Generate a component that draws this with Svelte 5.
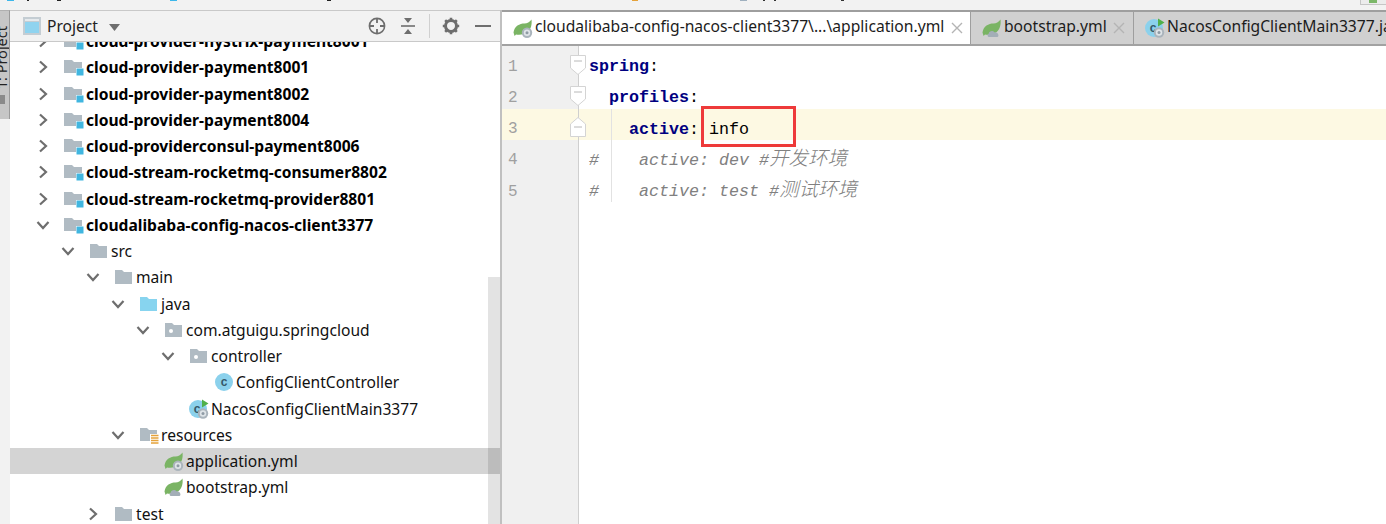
<script>
  const rows = [
    { d: 0, c: 'r', i: 'module', t: 'cloud-provider-hystrix-payment8001', b: true },
    { d: 0, c: 'r', i: 'module', t: 'cloud-provider-payment8001', b: true },
    { d: 0, c: 'r', i: 'module', t: 'cloud-provider-payment8002', b: true },
    { d: 0, c: 'r', i: 'module', t: 'cloud-provider-payment8004', b: true },
    { d: 0, c: 'r', i: 'module', t: 'cloud-providerconsul-payment8006', b: true },
    { d: 0, c: 'r', i: 'module', t: 'cloud-stream-rocketmq-consumer8802', b: true },
    { d: 0, c: 'r', i: 'module', t: 'cloud-stream-rocketmq-provider8801', b: true },
    { d: 0, c: 'd', i: 'module', t: 'cloudalibaba-config-nacos-client3377', b: true },
    { d: 1, c: 'd', i: 'folder', t: 'src' },
    { d: 2, c: 'd', i: 'folder', t: 'main' },
    { d: 3, c: 'd', i: 'java', t: 'java' },
    { d: 4, c: 'd', i: 'pkg', t: 'com.atguigu.springcloud' },
    { d: 5, c: 'd', i: 'pkg', t: 'controller' },
    { d: 6, c: '', i: 'class', t: 'ConfigClientController' },
    { d: 5, c: '', i: 'main', t: 'NacosConfigClientMain3377' },
    { d: 3, c: 'd', i: 'res', t: 'resources' },
    { d: 4, c: '', i: 'app', t: 'application.yml', sel: true },
    { d: 4, c: '', i: 'boot', t: 'bootstrap.yml' },
    { d: 2, c: 'r', i: 'folder', t: 'test' }
  ];
  const crumbs = [
    { x: 7, w: 7, col: '#3db7ea' }, { x: 27, w: 2, col: '#222' }, { x: 57, w: 4, col: '#222' },
    { x: 170, w: 7, col: '#3db7ea' }, { x: 327, w: 4, col: '#222' }, { x: 632, w: 6, col: '#e5a23a' },
    { x: 740, w: 7, col: '#9fb0bf' }, { x: 763, w: 2, col: '#333' }, { x: 774, w: 2, col: '#333' }, { x: 841, w: 3, col: '#333' }
  ];
</script>

{#snippet gear(cx, cy)}
  <circle {cx} {cy} r="5.2" fill="#aab4bc" />
  <circle {cx} {cy} r="3.2" fill="#dfe4e8" />
  <circle {cx} {cy} r="1.5" fill="#8f9ba5" />
{/snippet}

{#snippet leaf()}
  <path d="M0.5 14.5C1.5 8 6.5 5.5 11.5 5.5c2.8 0 5-1.5 7-4 .6 5-.4 9.5-3.8 12.5-3 2.5-8.5 3.4-11.7 2.4L1.6 18z" fill="#7ab464" />
{/snippet}

{#snippet icon(kind)}
  <svg class="ic" viewBox="0 0 20 20" aria-hidden="true">
    {#if kind === 'module'}
      <path d="M0 3h8l2 2h8v11H0z" fill="#b0bbc3" />
      <rect x="12" y="11" width="7.5" height="7.5" fill="#fff" />
      <rect x="12.5" y="11.5" width="7" height="7" fill="#40b6e0" />
    {:else if kind === 'folder'}
      <path d="M1 3h7l2 2h8v12H1z" fill="#b0bbc3" />
    {:else if kind === 'java'}
      <path d="M1 3h7l2 2h8v12H1z" fill="#87d4ef" />
    {:else if kind === 'pkg'}
      <path d="M1 3h7l2 2h8v12H1z" fill="#b0bbc3" />
      <circle cx="7" cy="11" r="2" fill="#fff" />
    {:else if kind === 'res'}
      <path d="M1 3h7l2 2h8v11H1z" fill="#b0bbc3" />
      <rect x="11" y="9" width="9" height="10" fill="#fff" />
      <path d="M12 10.5h7.5M12 13h7.5M12 15.5h7.5M12 18h7.5" stroke="#e5a23a" stroke-width="1.3" />
    {:else if kind === 'class'}
      <circle cx="10" cy="10" r="9" fill="#8bd1ec" />
      <text x="10" y="14" text-anchor="middle" class="cgl">c</text>
    {:else if kind === 'main'}
      <circle cx="9" cy="10" r="9" fill="#8bd1ec" />
      <text x="8" y="14" text-anchor="middle" class="cgl">c</text>
      <path d="M13 0.5l6.5 4-6.5 4z" fill="#4fb04a" />
      {@render gear(14, 14.5)}
    {:else if kind === 'app'}
      {@render leaf()}
      {@render gear(14, 14.8)}
    {:else if kind === 'boot'}
      {@render leaf()}
      <path d="M7.5 19c-2 0-2.8-2.8-.7-3.6.3-2.2 3.9-3.3 5.6-1.1 3.2-1.1 5.6 3.8 2.9 4.7z" fill="#a3aeb7" />
    {/if}
  </svg>
{/snippet}

{#snippet foldBox(up)}
  <svg class="fold" viewBox="0 0 18 22" aria-hidden="true">
    {#if up}
      <path d="M1.5 20.5V8L9 1.5 16.5 8v12.5z" fill="#fff" stroke="#d4d4d4" />
    {:else}
      <path d="M1.5 1.5h15V14L9 20.5 1.5 14z" fill="#fff" stroke="#d4d4d4" />
    {/if}
    <path d="M5 {up ? 11 : 7}h8" stroke="#b8b8b8" />
  </svg>
{/snippet}

{#snippet closeX()}
  <svg class="x" viewBox="0 0 12 12" aria-hidden="true"><path d="M1 1l10 10M11 1L1 11" stroke="#b4b4b4" stroke-width="1.4" /></svg>
{/snippet}

<div class="page">
  <div class="strip">
    {#each crumbs as k}
      <i class="crumb" style="left:{k.x}px;width:{k.w}px;background:{k.col}"></i>
    {/each}
    <div class="corner"><i></i></div>
  </div>

  <div class="body">
    <aside class="rail">
      <div class="railtab">
        <span>1: Project</span>
        <i class="railmark"></i>
      </div>
    </aside>

    <section class="pane">
      <header class="phead">
        <svg class="pico" viewBox="0 0 18 18" aria-hidden="true">
          <rect width="18" height="18" fill="#c4cdd3" />
          <rect x="2" y="5" width="14" height="11" fill="#8fd3ef" />
          <rect x="2" y="2" width="14" height="2" fill="#e6eaed" />
        </svg>
        <span class="ptitle">Project</span>
        <svg class="parrow" viewBox="0 0 11 7" aria-hidden="true"><path d="M0 0h11L5.5 7z" fill="#6e6e6e" /></svg>
        <span class="spacer"></span>
        <svg class="tool" viewBox="0 0 18 18" aria-hidden="true">
          <circle cx="9" cy="9" r="7.6" fill="none" stroke="#6e6e6e" stroke-width="1.6" />
          <path d="M9 1v5M9 12v5M1 9h5M12 9h5" stroke="#6e6e6e" stroke-width="1.8" />
        </svg>
        <svg class="tool t2" viewBox="0 0 18 18" aria-hidden="true">
          <path d="M2 9h14" stroke="#6e6e6e" stroke-width="1.6" />
          <path d="M5 1h8L9 6zM5 17h8l-4-5z" fill="#6e6e6e" />
        </svg>
        <i class="psep"></i>
        <svg class="tool t3" viewBox="0 0 18 18" aria-hidden="true">
          <path d="M9 3.5a5.5 5.5 0 1 0 0 11 5.5 5.5 0 0 0 0-11z" fill="none" stroke="#6e6e6e" stroke-width="3" />
          <path d="M9 .8v3M9 14.2v3M.8 9h3M14.2 9h3M3.2 3.2l2.1 2.1M12.7 12.7l2.1 2.1M3.2 14.8l2.1-2.1M12.7 5.3l2.1-2.1" stroke="#6e6e6e" stroke-width="2.6" />
        </svg>
        <i class="minus"></i>
      </header>
      <div class="tree">
        <div class="treelist">
          {#each rows as r}
            <div class="row" class:sel={r.sel} class:bold={r.b} style="padding-left:{26 + 25 * r.d}px">
              <span class="chev">
                {#if r.c === 'r'}
                  <svg viewBox="0 0 12 14" aria-hidden="true"><path d="M3 1.5L9 7l-6 5.5" fill="none" stroke="#6e6e6e" stroke-width="2.2" /></svg>
                {:else if r.c === 'd'}
                  <svg viewBox="0 0 14 12" aria-hidden="true"><path d="M1.5 3L7 9l5.5-6" fill="none" stroke="#6e6e6e" stroke-width="2.2" /></svg>
                {/if}
              </span>
              {@render icon(r.i)}
              <span class="lbl">{r.t}</span>
            </div>
          {/each}
        </div>
        <div class="thumb"></div>
      </div>
    </section>

    <main class="editor">
      <nav class="tabs">
        <div class="tab on t-a">
          {@render icon('app')}
          <span class="tt">cloudalibaba-config-nacos-client3377\...\application.yml</span>
          {@render closeX()}
        </div>
        <div class="tab t-b">
          {@render icon('boot')}
          <span class="tt">bootstrap.yml</span>
          {@render closeX()}
        </div>
        <div class="tab t-c">
          {@render icon('main')}
          <span class="tt">NacosConfigClientMain3377.java</span>
        </div>
      </nav>
      <div class="lines">
        <div class="ln">
          <div class="gut"><span>1</span><div class="foldwrap">{@render foldBox(false)}</div></div>
          <div class="code"><span class="key">spring</span>:</div>
        </div>
        <div class="ln">
          <div class="gut"><span>2</span><div class="foldwrap">{@render foldBox(false)}</div></div>
          <div class="code">{'  '}<span class="key">profiles</span>:</div>
        </div>
        <div class="ln cur">
          <div class="gut"><span>3</span><div class="foldwrap up">{@render foldBox(true)}</div></div>
          <div class="code guide">{'    '}<span class="key">active</span>: info<div class="redbox"></div></div>
        </div>
        <div class="ln">
          <div class="gut"><span>4</span></div>
          <div class="code guide cm">#    active: dev #<span class="cjk">开发环境</span></div>
        </div>
        <div class="ln">
          <div class="gut"><span>5</span></div>
          <div class="code guide cm">#    active: test #<span class="cjk">测试环境</span></div>
        </div>
        <div class="rest"><div class="gut fill"></div></div>
      </div>
    </main>
  </div>
</div>

<style>
  :global(body) { margin: 0; background: #fff; }
  .page {
    width: 1386px; height: 524px; overflow: hidden; display: flex; flex-direction: column;
    font-family: "Noto Sans", "Open Sans", sans-serif; color: #1a1a1a; background: #fff;
  }
  .strip { height: 10px; flex: none; background: #f2f2f2; position: relative; }
  .crumb { position: absolute; top: 0; height: 1px; }
  .corner {
    position: absolute; top: -1px; right: 0; width: 26px; height: 6px;
    border: 1px solid #c6c6c6; border-right: 0; background: #ececec; box-sizing: border-box;
  }
  .corner i { display: block; width: 8px; height: 3px; margin-left: 8px; background: #7cb769; }
  .body { flex: 1; display: flex; min-height: 0; }

  .rail { width: 10px; flex: none; background: #f2f2f2; }
  .railtab {
    height: 109px; box-sizing: border-box; background: #c6c6c6; border-right: 1px solid #9a9a9a;
    border-top: 1px solid #b0b0b0; overflow: hidden; position: relative;
  }
  .railtab span {
    position: absolute; left: -6px; top: 15px; writing-mode: vertical-rl; transform: rotate(180deg);
    font-size: 14.5px; line-height: 14px; color: #222; white-space: nowrap;
  }
  .railmark { position: absolute; left: 0; top: 84px; width: 5px; height: 9px; background: #8a8a8a; }

  .pane { width: 490px; flex: none; display: flex; flex-direction: column; min-height: 0; }
  .phead {
    height: 32px; flex: none; box-sizing: border-box; display: flex; align-items: center;
    background: #f2f2f2; border-top: 1px solid #c9c9c9; border-bottom: 1px solid #c9c9c9; padding-left: 13px;
  }
  .pico { width: 18px; height: 18px; }
  .ptitle { margin-left: 6px; font-size: 15.6px; color: #222; }
  .parrow { width: 11px; height: 7px; margin-left: 11px; margin-top: 2px; }
  .spacer { flex: 1; }
  .tool { width: 18px; height: 18px; flex: none; }
  .t2 { margin-left: 13px; }
  .psep { width: 1px; height: 24px; background: #d0d0d0; margin-left: 12px; }
  .t3 { margin-left: 12px; }
  .minus { width: 16px; height: 2px; background: #6e6e6e; margin: 0 9px 0 15px; }

  .tree { flex: 1; position: relative; overflow: hidden; min-height: 0; }
  .treelist { margin-top: -14px; }
  .row {
    height: 26.25px; display: flex; align-items: center; box-sizing: border-box; font-size: 15.6px; white-space: nowrap; color: #111;
  }
  .row.bold { font-weight: 700; font-size: 15.6px; color: #000; }
  .row.sel { background: #d4d4d4; }
  .chev { width: 14px; height: 14px; margin-right: 14px; display: flex; align-items: center; justify-content: center; flex: none; }
  .chev svg { width: 14px; height: 14px; }
  .ic { width: 20px; height: 20px; margin-right: 2px; flex: none; }
  .cgl { font: 700 12px "Liberation Sans", sans-serif; fill: #35586a; }
  .thumb { position: absolute; right: 0; top: 235px; bottom: 0; width: 12px; background: rgba(0, 0, 0, .11); }

  .editor { flex: 1; min-width: 0; border-left: 2px solid #c0c0c0; display: flex; flex-direction: column; }
  .tabs {
    height: 36px; flex: none; box-sizing: border-box; display: flex; background: #d0d0d0;
    border-top: 2px solid #9e9e9e; border-bottom: 2px solid #a2a2a2; font-size: 15.65px; overflow: hidden;
  }
  .tab { display: flex; align-items: center; flex: none; box-sizing: border-box; white-space: nowrap; color: #1c1c1c; border-right: 1px solid #9e9e9e; }
  .tt { margin-top: -4px; }
  .tab.on { background: #fff; }
  .t-a { width: 469px; padding-left: 11px; }
  .t-b { width: 163px; padding-left: 11px; }
  .t-c { padding-left: 11px; border-right: 0; }
  .x { width: 12px; height: 12px; flex: none; margin-top: -1px; }
  .t-a .x { margin-left: 7px; }
  .t-b .x { margin-left: 6px; }

  .lines { flex: 1; display: flex; flex-direction: column; min-height: 0; }
  .ln { height: 31.25px; display: flex; flex: none; }
  .ln.cur { background: #fdf9e3; }
  .gut {
    width: 77px; flex: none; box-sizing: border-box; background: #f0f0f0; border-right: 1px solid #cfcfcf;
    position: relative; padding: 10px 0 0 6px; display: flex; align-items: center;
    font: 16px "Liberation Mono", monospace; color: #a0a0a0;
  }
  .cur .gut { background: #fdf9e3; }
  .foldwrap { position: absolute; left: 67px; top: 8px; width: 18px; height: 22px; z-index: 1; }
  .foldwrap.up { top: 7px; }
  .fold { display: block; width: 18px; height: 22px; }
  .code {
    flex: 1; position: relative; white-space: pre; padding-left: 10px;
    font: 16.67px/41px "Liberation Mono", monospace; color: #000;
  }
  .guide::before { content: ""; position: absolute; left: 32px; top: 0; height: 31.25px; width: 1px; background: #e2e2e2; }
  .key { color: #000080; font-weight: 700; }
  .cm { color: #808080; font-style: italic; }
  .cjk { font-family: "Noto Sans CJK SC", sans-serif; font-size: 19.5px; font-weight: 300; line-height: 1; }
  .redbox {
    position: absolute; left: 122px; top: -3px; width: 95px; height: 41px; box-sizing: border-box;
    border: 3px solid #ee3a3a; z-index: 2;
  }
  .rest { flex: 1; display: flex; min-height: 0; }
  .fill { height: 100%; padding: 0; }
</style>
